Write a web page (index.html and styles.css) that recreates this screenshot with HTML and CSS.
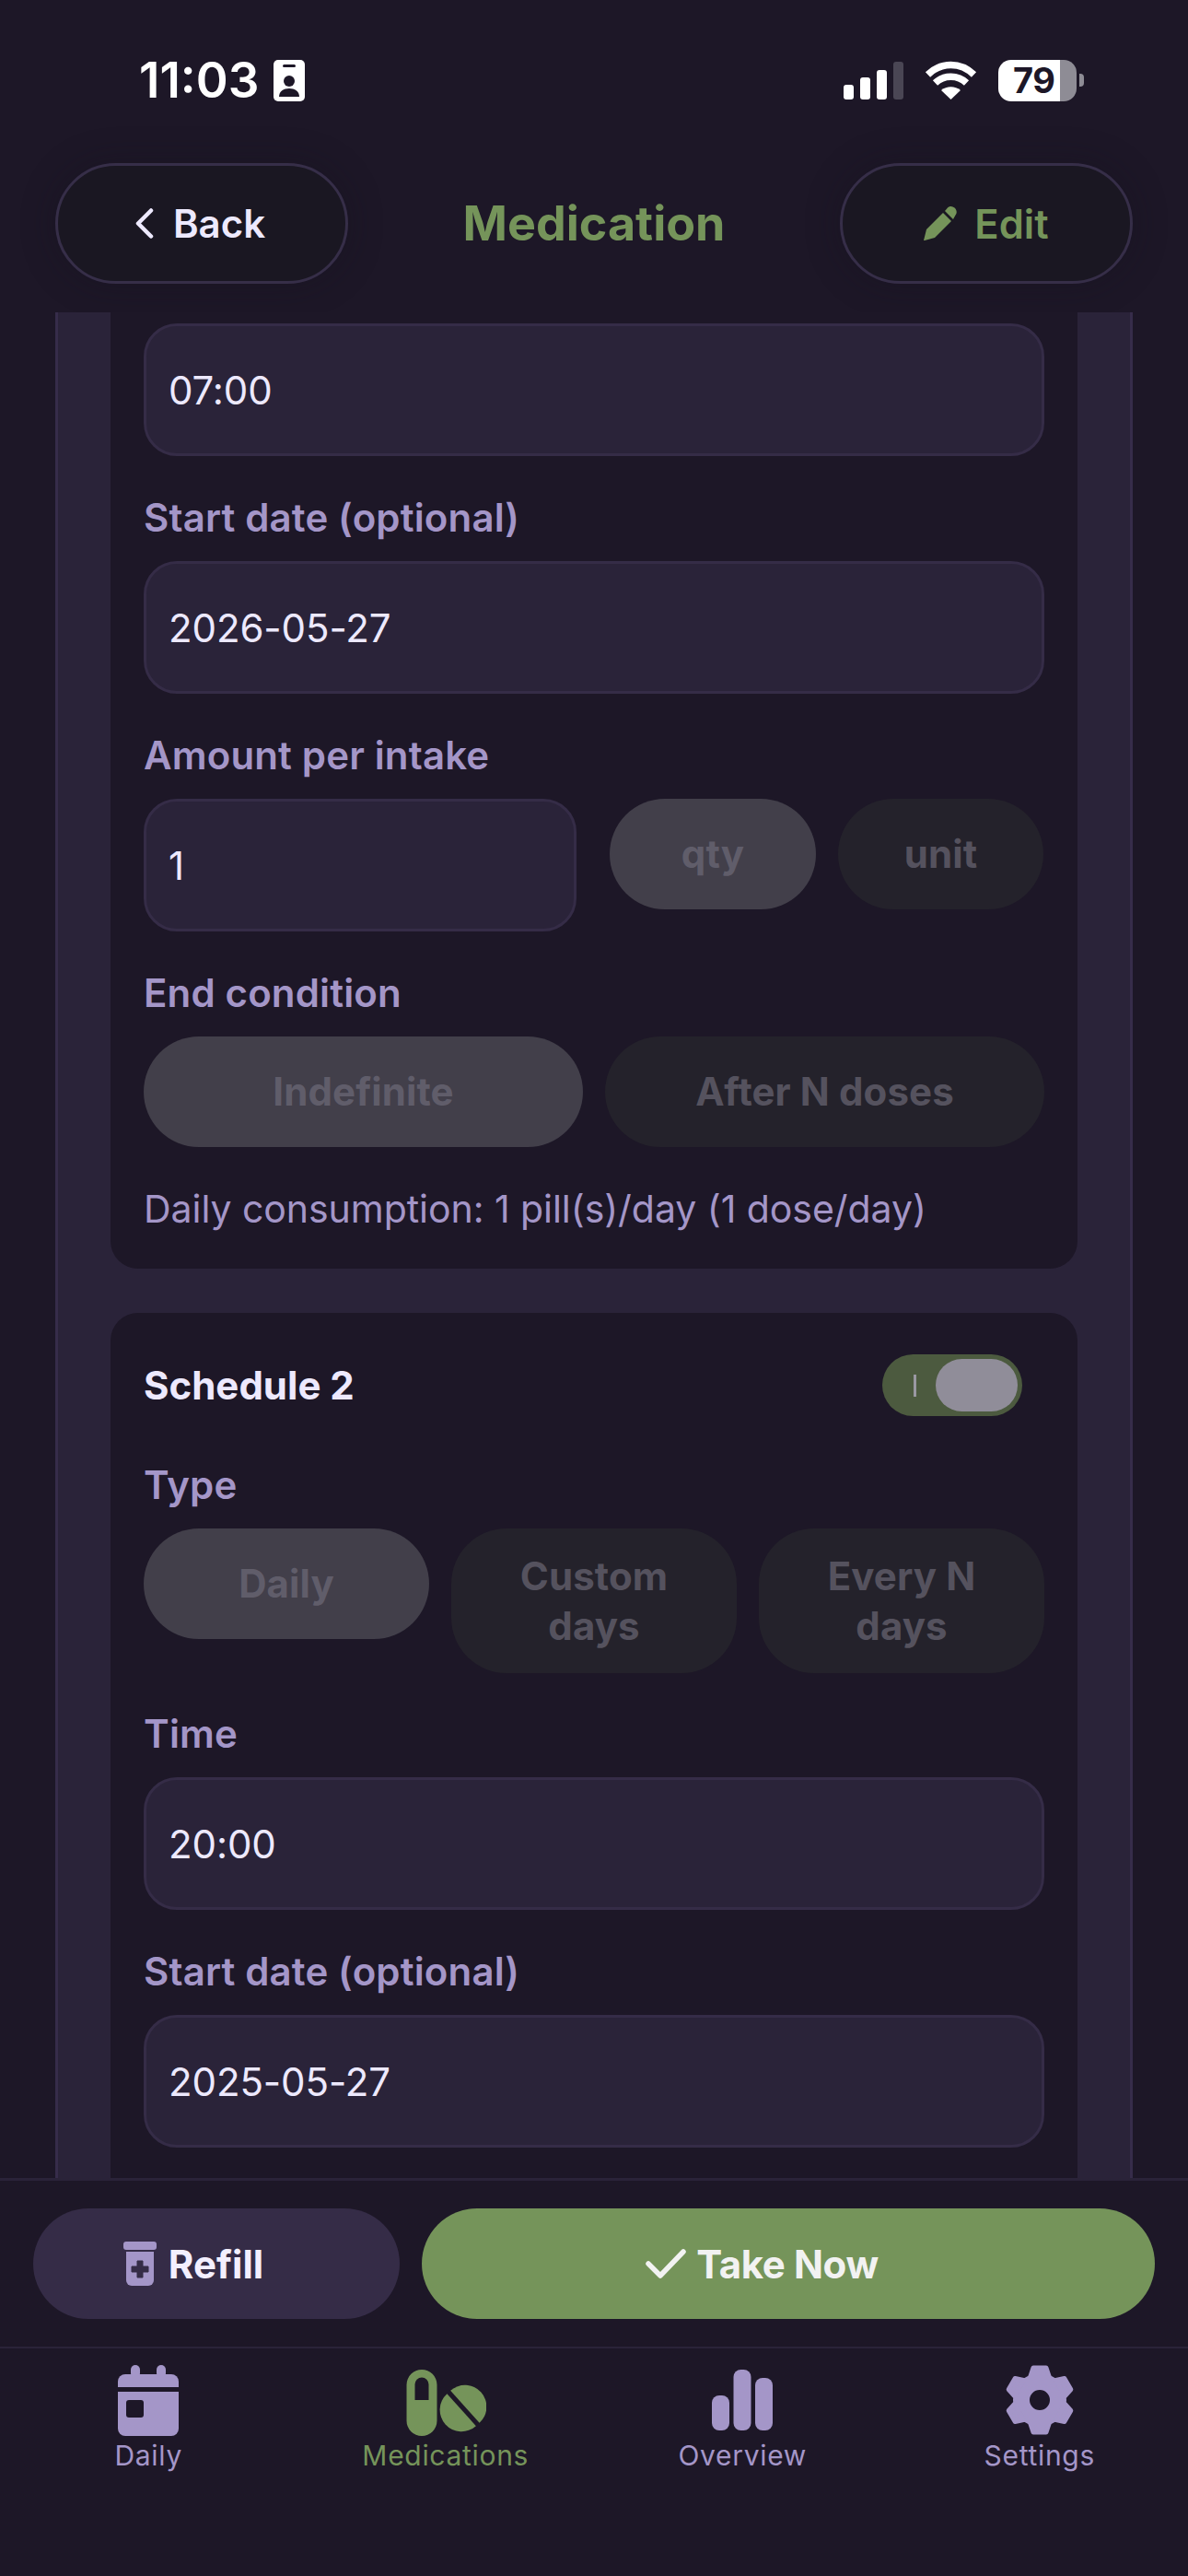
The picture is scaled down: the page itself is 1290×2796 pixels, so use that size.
FILE: index.html
```html
<!DOCTYPE html>
<html lang="en">
<head>
<meta charset="utf-8">
<title>Medication</title>
<link rel="stylesheet" href="styles.css">
</head>
<body>
<div class="app">
  <div class="status">
    <div class="status-left">
      <span class="clock">11:03</span>
      <svg class="ico-card" viewBox="0 0 34 45"><rect width="34" height="45" rx="5" fill="#fff"/><rect x="10" y="5" width="14" height="3" rx="1.5" fill="#1d1727"/><circle cx="17" cy="23" r="6" fill="#1d1727"/><path d="M6 40c0-6 5-9 11-9s11 3 11 9z" fill="#1d1727"/></svg>
    </div>
    <div class="status-right">
      <div class="signal"><i class="s1"></i><i class="s2"></i><i class="s3"></i><i class="s4"></i></div>
      <svg class="ico-wifi" viewBox="0 0 57 42"><path d="M3.5 15C18 1 39 1 53.5 15" fill="none" stroke="#fff" stroke-width="7.5"/><path d="M11.5 24C21 15 36 15 45.5 24" fill="none" stroke="#fff" stroke-width="7.5"/><path d="M18 32c6-5 15-5 21 0L28.5 42z" fill="#fff"/></svg>
      <div class="battery-wrap">
        <div class="battery"><span>79</span></div>
        <div class="nub"></div>
      </div>
    </div>
  </div>

  <header class="topbar">
    <div class="hbtn">
      <svg class="ico-chev" viewBox="0 0 20 33"><path d="M17 2.5 3 16.5l14 14" fill="none" stroke="#ede9fe" stroke-width="4.5" stroke-linecap="round" stroke-linejoin="round"/></svg>
      <span class="back-text">Back</span>
    </div>
    <h1 class="title">Medication</h1>
    <div class="hbtn">
      <svg class="ico-pencil" viewBox="0 0 37 37"><path d="M0 37 3 25 21 7 30 16 12 34 1 37z" fill="#75945a"/><path d="M23 5l3-3.500c2-2 5-2 7.500 0 2.500 2.500 3 5.500 1 8L32 14z" fill="#75945a"/></svg>
      <span class="edit-text">Edit</span>
    </div>
  </header>

  <main class="scroll">
    <div class="outer">
      <section class="sched first">
        <div class="input">07:00</div>
        <label class="lab">Start date (optional)</label>
        <div class="input">2026-05-27</div>
        <label class="lab">Amount per intake</label>
        <div class="amount">
          <div class="input grow">1</div>
          <div class="pills tight">
            <div class="pill on qty">qty</div>
            <div class="pill unit">unit</div>
          </div>
        </div>
        <label class="lab">End condition</label>
        <div class="pills">
          <div class="pill on">Indefinite</div>
          <div class="pill">After N doses</div>
        </div>
        <p class="note">Daily consumption: 1 pill(s)/day (1 dose/day)</p>
      </section>

      <section class="sched second">
        <div class="sched-head">
          <span class="sched-title">Schedule 2</span>
          <div class="toggle"><i class="bar"></i><i class="thumb"></i></div>
        </div>
        <label class="lab">Type</label>
        <div class="pills top">
          <div class="pill on">Daily</div>
          <div class="pill">Custom days</div>
          <div class="pill">Every N days</div>
        </div>
        <label class="lab after-top">Time</label>
        <div class="input">20:00</div>
        <label class="lab">Start date (optional)</label>
        <div class="input">2025-05-27</div>
      </section>
    </div>
  </main>

  <div class="actions">
    <div class="act refill">
      <svg class="ico-refill" viewBox="0 0 36 48"><rect width="36" height="9" rx="3" fill="#a496c8"/><path d="M3 11h30v31a6 6 0 0 1-6 6H9a6 6 0 0 1-6-6z" fill="#a496c8"/><path d="M15 21h6v6h6v6h-6v6h-6v-6H9v-6h6z" fill="#352c47" stroke="#352c47" stroke-width="1" stroke-linejoin="round"/></svg>
      <span>Refill</span>
    </div>
    <div class="act take">
      <svg class="ico-check" viewBox="0 0 44 32"><path d="M3 16 16 29 41 3" fill="none" stroke="#f2f2f2" stroke-width="5.500" stroke-linecap="round" stroke-linejoin="round"/></svg>
      <span>Take Now</span>
    </div>
  </div>

  <nav class="tabs">
    <div class="tab">
      <svg class="tab-ico" viewBox="0 0 80 78"><g fill="#a496c8"><rect x="21" y="0" width="10" height="14" rx="5"/><rect x="49" y="0" width="10" height="14" rx="5"/><path d="M7 18a8 8 0 0 1 8-8h50a8 8 0 0 1 8 8v6H7z"/><path d="M7 29h66v40a8 8 0 0 1-8 8H15a8 8 0 0 1-8-8z"/></g><rect x="16" y="38" width="19" height="19" rx="3" fill="#1d1727"/></svg>
      <span>Daily</span>
    </div>
    <div class="tab active">
      <svg class="tab-ico" viewBox="0 0 88 78"><path d="M18 5a16.500 16.500 0 0 1 16.500 16.500v39a16.500 16.500 0 0 1-33 0v-39A16.500 16.500 0 0 1 18 5z" fill="#75945a"/><path d="M10.500 38V21a7.500 7.500 0 0 1 15 0v17z" fill="#1d1727"/><g transform="rotate(48 63 47)" fill="#75945a"><path d="M39.500 44.500a23.500 23.500 0 0 1 47 0z"/><path d="M39.500 49.500h47a23.500 23.500 0 0 1-47 0z"/></g></svg>
      <span>Medications</span>
    </div>
    <div class="tab">
      <svg class="tab-ico" viewBox="0 0 80 78"><g fill="#a496c8"><rect x="7" y="33" width="19" height="38" rx="8"/><rect x="30.500" y="5" width="19" height="66" rx="8"/><rect x="54" y="14" width="19" height="57" rx="8"/></g></svg>
      <span>Overview</span>
    </div>
    <div class="tab">
      <svg class="tab-ico" viewBox="0 0 80 78"><g transform="translate(40 38)" fill="#a496c8" stroke="#a496c8" stroke-width="5" stroke-linejoin="round"><circle r="20" fill="none" stroke-width="18"/><path d="M-10 -26-7 -35H7L10 -26z"/><path d="M-10 -26-7 -35H7L10 -26z" transform="rotate(60)"/><path d="M-10 -26-7 -35H7L10 -26z" transform="rotate(120)"/><path d="M-10 -26-7 -35H7L10 -26z" transform="rotate(180)"/><path d="M-10 -26-7 -35H7L10 -26z" transform="rotate(240)"/><path d="M-10 -26-7 -35H7L10 -26z" transform="rotate(300)"/></g></svg>
      <span>Settings</span>
    </div>
  </nav>
</div>
</body>
</html>
```
FILE: styles.css
```css
* { box-sizing: border-box; }
html, body { margin: 0; padding: 0; background: #1d1727; }
body { font-family: "Inter", "Liberation Sans", sans-serif; }
.app { width: 1290px; height: 2796px; display: flex; flex-direction: column; overflow: hidden; background: #1d1727; }

.status { height: 174px; flex: none; display: flex; align-items: center; justify-content: space-between; padding: 0 113px 0 151px; }
.status-left { display: flex; align-items: center; gap: 15px; }
.clock { font-size: 53px; font-weight: 600; color: #fff; line-height: 60px; width: 131px; white-space: nowrap; }
.ico-card { width: 34px; height: 45px; display: block; }
.status-right { display: flex; align-items: center; gap: 23px; }
.signal { display: flex; align-items: flex-end; gap: 7px; height: 41px; }
.signal i { display: block; width: 11px; border-radius: 3px; background: #fff; }
.s1 { height: 16px; } .s2 { height: 24px; } .s3 { height: 32px; }
.signal .s4 { height: 41px; background: #4a4654; }
.ico-wifi { width: 57px; height: 42px; display: block; }
.battery-wrap { display: flex; align-items: center; gap: 3px; }
.battery { width: 85px; height: 45px; border-radius: 14px; background: linear-gradient(90deg, #fff 67px, #8e8c95 67px); display: flex; align-items: center; padding-left: 16px; }
.battery span { font-size: 38px; font-weight: 700; color: #1d1727; line-height: 45px; letter-spacing: -.5px; }
.nub { width: 5px; height: 14px; border-radius: 0 4px 4px 0; background: #8e8c95; }

.topbar { flex: none; display: flex; align-items: center; justify-content: space-between; padding: 3px 60px 31px; }
.hbtn { width: 318px; height: 131px; border-radius: 66px; background: #1a1722; border: 3px solid #362e48; display: flex; align-items: center; justify-content: center; box-shadow: 0 0 36px rgba(20, 16, 28, .35); }
.ico-chev { width: 20px; height: 33px; margin: 0 23px 0 -3px; display: block; }
.back-text { font-size: 42px; font-weight: 600; color: #ede9fe; margin-left: -2px; }
.ico-pencil { width: 37px; height: 37px; margin-right: 18px; display: block; }
.edit-text { font-size: 43.500px; font-weight: 600; color: #75945a; }
.title { margin: 0; font-size: 52px; font-weight: 700; color: #75945a; }

.scroll { flex: 1; min-height: 0; overflow: hidden; }
.outer { margin: 0 60px; padding: 12px 57px 60px; background: #2a2339; border-left: 3px solid #362c4a; border-right: 3px solid #362c4a; display: flex; flex-direction: column; gap: 48px; }
.sched { background: #1d1727; border-radius: 30px; padding: 36px; }
.sched.first { margin-top: -12px; padding: 12px 36px 38px; border-radius: 0 0 30px 30px; }
.sched.second { padding-bottom: 120px; }

.input { height: 144px; border-radius: 36px; background: #2a2339; border: 3px solid #352c47; padding-left: 24px; display: flex; align-items: center; font-size: 42px; color: #ede9fe; letter-spacing: -.1px; }
.lab { display: block; margin: 41px 0 22px; font-size: 42px; line-height: 51px; font-weight: 600; letter-spacing: .15px; color: #a496c8; }
.lab.after-top { margin-top: 40px; }

.amount { display: flex; gap: 36px; }
.grow { width: 470px; flex: none; }
.pills { display: flex; gap: 24px; }
.pills .pill { flex: 1 1 0; }
.pills.top { align-items: flex-start; }
.pills.tight { flex: 1; align-items: flex-start; }
.pills.tight .qty { flex: none; width: 224px; }
.pills.tight .unit { flex: none; width: 223px; }
.pill { min-height: 120px; border-radius: 60px; background: #24222b; color: #55525e; font-size: 42px; font-weight: 700; letter-spacing: .1px; line-height: 54px; padding: 24.5px 36px; display: flex; align-items: center; justify-content: center; text-align: center; }
.pill.on { background: #423f4a; color: #605d6a; }

.note { margin: 40px 0 0; font-size: 41px; line-height: 54px; letter-spacing: -.05px; color: #a496c8; }

.sched-head { height: 84px; display: flex; align-items: center; justify-content: space-between; }
.sched-title { font-size: 42px; font-weight: 700; color: #ede9fe; }
.toggle { position: relative; width: 152px; height: 67px; margin-right: 24px; border-radius: 34px; background: #4c5a3f; }
.toggle .bar { position: absolute; left: 34px; top: 22px; width: 3px; height: 24px; background: #9a98a2; }
.toggle .thumb { position: absolute; left: 58px; top: 5px; width: 89px; height: 57px; border-radius: 29px; background: #908d99; }

.actions { flex: none; display: flex; gap: 24px; padding: 30px 36px; border-top: 3px solid #2a2339; border-bottom: 2px solid #2a2339; }
.act { height: 120px; border-radius: 60px; display: flex; align-items: center; justify-content: center; font-size: 42px; font-weight: 700; }
.refill { width: 398px; flex: none; background: #352c47; color: #f3efff; gap: 13px; padding-right: 50px; }
.take { flex: 1; background: #75945a; color: #f2f2f2; gap: 11px; padding-right: 57px; letter-spacing: -.4px; }
.ico-refill { width: 36px; height: 48px; display: block; }
.ico-check { width: 44px; height: 32px; display: block; }

.tabs { flex: none; height: 247px; display: grid; grid-template-columns: repeat(4, 1fr); padding-top: 18px; align-items: start; }
.tab { display: flex; flex-direction: column; align-items: center; font-size: 30px; line-height: 36px; letter-spacing: .7px; color: #a496c8; gap: 2px; }
.tab.active { color: #75945a; }
.tab-ico { height: 78px; width: 80px; display: block; }
.tab.active .tab-ico { width: 88px; }
```
